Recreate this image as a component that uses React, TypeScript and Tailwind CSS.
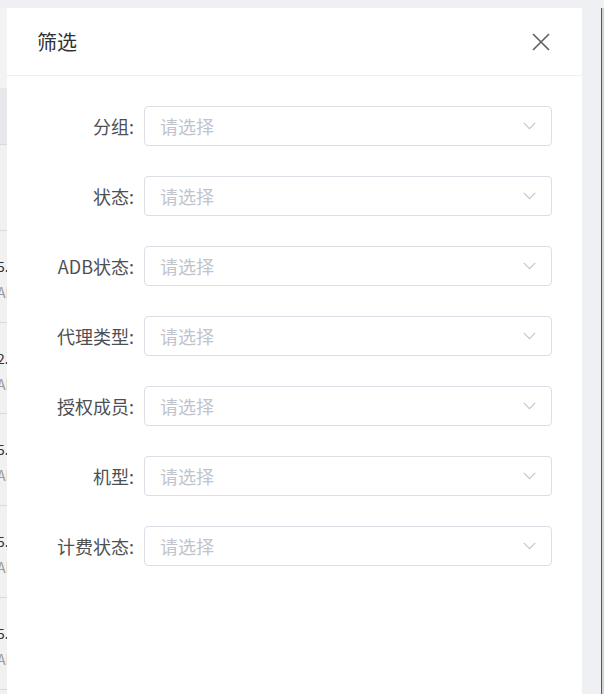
import React from "react";

const fields = ["分组", "状态", "ADB状态", "代理类型", "授权成员", "机型", "计费状态"];

const bgRows = [
  { h: "h-[86px]", a: "", b: "" },
  { h: "h-[92px]", a: "5.1", b: "AB" },
  { h: "h-[91px]", a: "2.1", b: "AB" },
  { h: "h-[92px]", a: "5.1", b: "AB" },
  { h: "h-[92px]", a: "5.1", b: "AB" },
  { h: "h-[92px]", a: "5.1", b: "AB" },
];

function Chevron() {
  return (
    <svg width="13" height="8" viewBox="0 0 13 8" fill="none">
      <path d="M0.8 0.8 L6.5 6.6 L12.2 0.8" stroke="#c0c4cc" strokeWidth="1.1" />
    </svg>
  );
}

function CloseIcon() {
  return (
    <svg width="18" height="18" viewBox="0 0 18 18" fill="none">
      <path d="M1 1 L17 17 M17 1 L1 17" stroke="#606266" strokeWidth="1.7" />
    </svg>
  );
}

export default function App() {
  const font = { fontFamily: '"Microsoft YaHei", "Noto Sans CJK SC", "Noto Sans", sans-serif' };
  return (
    <div
      className="w-[604px] h-[694px] bg-[#eef0f4] flex flex-col overflow-hidden"
      style={font}
    >
      <div className="h-2 shrink-0" />
      <div className="flex flex-1 min-h-0">
        {/* page behind the drawer */}
        <div className="w-[7px] shrink-0 overflow-hidden flex flex-col bg-[#f1f1f2]">
          <div className="h-[80px] shrink-0 bg-[#f3f3f4]" />
          <div className="h-[57px] shrink-0 bg-[#e7e8ec] border-b border-[#d8d8da]" />
          {bgRows.map((r, i) => (
            <div
              key={i}
              className={`${r.h} shrink-0 border-b border-[#d9d9d9] pt-[25px] flex flex-col`}
            >
              <span className="ml-[-3px] whitespace-nowrap text-[14px] leading-[20px] text-[#333]">
                {r.a}
              </span>
              <span className="ml-[-3px] mt-[6px] whitespace-nowrap text-[14px] leading-[20px] text-[#9a9a9a]">
                {r.b}
              </span>
            </div>
          ))}
        </div>

        {/* drawer */}
        <div className="w-[575px] shrink-0 bg-white flex flex-col">
          <div className="h-[68px] shrink-0 border-b border-[#ebeef5] flex items-center justify-between pl-[30px] pr-[32px]">
            <span className="text-[20px] leading-[26px] text-[#303133]">筛选</span>
            <CloseIcon />
          </div>
          <div className="pt-[30px] pr-[30px] flex flex-col gap-[30px]">
            {fields.map((f) => (
              <div key={f} className="flex items-center h-10">
                <div className="w-[137px] shrink-0 pr-[10px] text-right text-[18px] leading-[24px] text-[#4d4f53] whitespace-nowrap">
                  {f}:
                </div>
                <div className="flex-1 h-10 border border-[#dcdfe6] rounded-[4px] flex items-center justify-between pl-[15px] pr-[15px]">
                  <span className="text-[18px] leading-[24px] text-[#c0c4cc]">请选择</span>
                  <Chevron />
                </div>
              </div>
            ))}
          </div>
        </div>

        <div className="w-[19px] shrink-0" />
        <div className="w-px shrink-0 bg-[#5b5b5b]" />
        <div className="w-[2px] shrink-0 bg-[#d2d2d4]" />
      </div>
    </div>
  );
}
